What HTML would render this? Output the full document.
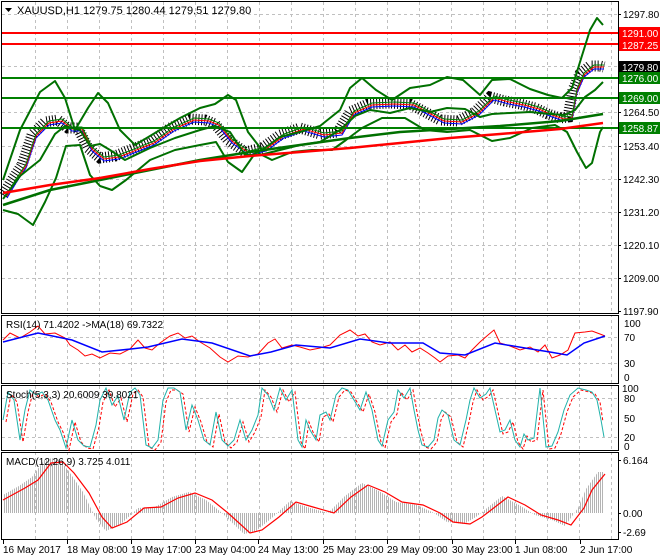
<!DOCTYPE html><html><head><meta charset="utf-8"><style>
body{margin:0;background:#fff;width:660px;height:560px;overflow:hidden}
svg{display:block;font-family:"Liberation Sans",sans-serif;font-size:10px}
</style></head><body>
<svg width="660" height="560" xmlns="http://www.w3.org/2000/svg">
<defs>
<pattern id="hb" width="2" height="10" patternUnits="userSpaceOnUse"><rect width="1" height="10" fill="#b4b4b4"/></pattern>
</defs>
<path d="M35.5 2V539M67.5 2V539M99.5 2V539M131.5 2V539M163.5 2V539M195.5 2V539M227.5 2V539M259.5 2V539M291.5 2V539M323.5 2V539M355.5 2V539M387.5 2V539M419.5 2V539M451.5 2V539M483.5 2V539M515.5 2V539M547.5 2V539M579.5 2V539M611.5 2V539" stroke="#c0c0c0" stroke-dasharray="3,3"/>
<path d="M2 14.5H618M2 44.5H618M2 66.5H618M2 112.5H618M2 146.5H618M2 179.5H618M2 212.5H618M2 245.5H618M2 278.5H618M2 337.5H618M2 363.5H618M2 398.5H618M2 437.5H618" stroke="#c0c0c0" stroke-dasharray="3,3"/>
<rect x="0" y="314" width="618" height="2" fill="#fff"/><rect x="0" y="384" width="618" height="2" fill="#fff"/><rect x="0" y="451" width="618" height="2" fill="#fff"/>
<g fill="none" stroke="#000">
<rect x="1.5" y="1.5" width="617" height="312"/>
<rect x="1.5" y="315.5" width="617" height="68"/>
<rect x="1.5" y="385.5" width="617" height="65"/>
<rect x="1.5" y="452.5" width="617" height="87"/>
</g>
<polyline fill="none" stroke="#000" stroke-width="11" stroke-dasharray="1,2" points="3,195 12,180 22,165 32,135 45,122 58,120 68,128 78,128 88,148 100,158 115,156 130,150 150,142 170,128 190,119 205,120 215,124 228,140 245,152 262,148 280,135 300,128 320,134 338,132 350,112 368,104 390,103 410,104 425,112 440,120 458,121 475,112 490,97 505,101 520,104 535,108 548,114 560,118 568,117 573,90 580,74 590,66 600,66 604,67"/>
<g fill="none">
<polyline stroke="#00f" transform="translate(4,3)" points="3,195 12,180 22,165 32,135 45,122 58,120 68,128 78,128 88,148 100,158 115,156 130,150 150,142 170,128 190,119 205,120 215,124 228,140 245,152 262,148 280,135 300,128 320,134 338,132 350,112 368,104 390,103 410,104 425,112 440,120 458,121 475,112 490,97 505,101 520,104 535,108 548,114 560,118 568,117 573,90 580,74 590,66 600,66"/>
<polyline stroke="#f00" transform="translate(4,1)" points="3,195 12,180 22,165 32,135 45,122 58,120 68,128 78,128 88,148 100,158 115,156 130,150 150,142 170,128 190,119 205,120 215,124 228,140 245,152 262,148 280,135 300,128 320,134 338,132 350,112 368,104 390,103 410,104 425,112 440,120 458,121 475,112 490,97 505,101 520,104 535,108 548,114 560,118 568,117 573,90 580,74 590,66 600,66"/>
<polyline stroke="#008000" transform="translate(4,-1)" points="3,195 12,180 22,165 32,135 45,122 58,120 68,128 78,128 88,148 100,158 115,156 130,150 150,142 170,128 190,119 205,120 215,124 228,140 245,152 262,148 280,135 300,128 320,134 338,132 350,112 368,104 390,103 410,104 425,112 440,120 458,121 475,112 490,97 505,101 520,104 535,108 548,114 560,118 568,117 573,90 580,74 590,66 600,66"/>
</g>
<path d="M2 33H618M2 44H618" stroke="#f00" stroke-width="2"/>
<path d="M2 78H618M2 98H618M2 128H618" stroke="#008000" stroke-width="2"/>
<g fill="none" stroke="#007000" stroke-width="2" stroke-linejoin="round">
<polyline points="3,180 20,130 40,92 55,81 65,98 75,130 88,108 98,93 108,103 120,130 135,145 160,130 180,118 200,108 215,104 228,95 236,100 248,132 262,150 280,137 300,132 320,126 340,110 350,88 362,78 376,90 392,100 410,88 430,85 447,77 463,80 480,95 492,80 510,79 530,89 548,95 562,98 572,88 580,62 590,30 597,18 603,25"/>
<polyline points="3,210 18,214 33,225 45,202 56,178 66,146 80,145 90,175 100,186 112,190 126,180 150,160 175,150 200,145 216,142 228,162 242,172 256,152 272,160 292,152 312,150 332,150 346,140 362,128 382,118 405,118 425,130 447,132 470,130 492,141 510,138 532,128 555,125 567,132 577,152 586,168 592,163 600,132 603,127"/>
<polyline points="3,199 20,176 40,160 55,134 65,126 80,130 90,146 100,144 110,150 125,160 150,148 175,138 200,130 215,126 230,132 245,155 260,155 280,150 300,145 320,142 340,130 355,116 370,110 390,113 410,108 430,112 447,108 465,109 480,117 492,114 510,113 530,112 550,114 565,115 575,110 585,97 595,90 603,82"/>
<polyline stroke-width="2.5" points="3,205 50,190 100,180 150,170 200,160 250,152 300,145 350,138 400,132 450,129 500,126 560,121 603,114"/>
</g>
<polyline fill="none" stroke="#f00" stroke-width="2.5" points="3,193 50,185 100,178 150,169 200,161 250,156 300,152 350,148 400,143 450,138 500,134 560,129 603,123"/>
<path d="M5 8L12 8L8.5 12Z" fill="#000"/>
<text x="17" y="14" font-size="11">XAUUSD,H1  1279.75 1280.44 1279.51 1279.80</text>
<g stroke="#000"><path d="M618 14.5h3M618 112.5h3M618 146.5h3M618 179.5h3M618 212.5h3M618 245.5h3M618 278.5h3M618 311.5h3M618 460.5h3M618 513.5h3M618 532.5h3"/></g>
<text x="623" y="18">1297.80</text>
<text x="623" y="116">1264.50</text>
<text x="623" y="150">1253.40</text>
<text x="623" y="183">1242.30</text>
<text x="623" y="216">1231.20</text>
<text x="623" y="249">1220.10</text>
<text x="623" y="282">1209.00</text>
<text x="623" y="315">1197.90</text>
<rect x="619" y="27" width="41" height="12" fill="#f00"/><text x="622" y="37" fill="#fff">1291.00</text>
<rect x="619" y="39" width="41" height="12" fill="#f00"/><text x="622" y="49" fill="#fff">1287.25</text>
<rect x="619" y="61" width="41" height="12" fill="#000"/><text x="622" y="71" fill="#fff">1279.80</text>
<rect x="619" y="72" width="41" height="12" fill="#008000"/><text x="622" y="82" fill="#fff">1276.00</text>
<rect x="619" y="92" width="41" height="12" fill="#008000"/><text x="622" y="102" fill="#fff">1269.00</text>
<rect x="619" y="122" width="41" height="12" fill="#008000"/><text x="622" y="132" fill="#fff">1258.87</text>
<polyline fill="none" stroke="#f00" points="3,340 10,333 20,338 30,332 38,326 45,334 55,333 65,338 70,345 78,350 85,356 92,354 100,358 110,353 120,354 130,349 138,340 145,348 152,350 160,343 170,336 178,333 185,338 192,336 200,342 210,348 220,357 228,362 238,356 248,357 258,354 268,343 275,339 282,348 292,345 300,347 310,350 320,348 330,345 340,335 350,330 358,336 365,334 372,342 380,345 390,342 398,350 405,345 412,352 420,348 428,353 435,358 440,362 448,356 458,355 465,358 472,350 480,342 488,335 494,330 500,343 510,346 520,350 530,347 538,352 545,345 552,358 560,355 568,350 575,333 585,332 592,331 600,334 605,336"/>
<polyline fill="none" stroke="#00f" stroke-width="1.5" points="3,342 38,333 72,340 102,352 131,349 148,347 182,339 212,343 250,356 271,352 296,345 330,348 360,339 389,343 423,343 440,353 465,355 495,343 525,348 550,352 567,355 584,343 605,336"/>
<text x="6" y="328">RSI(14) 71.4202  -&gt;MA(18) 69.7322</text>
<text x="624" y="327">100</text><text x="624" y="341">70</text><text x="624" y="367">30</text><text x="624" y="381">0</text>
<polyline fill="none" stroke="#f00" stroke-dasharray="3,2" transform="translate(3,2)" points="3,420 8,392 14,400 20,440 25,410 30,390 36,395 42,392 48,400 55,420 60,430 66,448 72,420 78,440 84,446 90,447 96,425 100,400 106,388 112,405 118,396 124,420 130,392 135,388 140,395 146,445 152,448 158,440 163,400 168,388 174,388 180,392 186,430 192,405 198,420 204,440 210,445 216,412 222,440 228,446 234,440 240,420 246,440 252,430 258,415 262,388 268,395 274,410 280,388 286,400 292,390 298,440 302,447 306,420 310,430 316,440 320,415 326,412 330,420 336,395 342,388 348,390 354,400 360,410 366,392 372,410 378,440 382,446 388,420 394,412 398,390 404,398 410,388 414,410 418,430 422,445 428,447 434,440 438,418 442,410 448,415 454,440 460,445 466,420 470,400 474,388 480,398 486,394 490,388 495,410 500,432 505,430 510,420 515,440 520,447 524,434 528,440 534,438 540,388 546,447 552,446 558,432 564,410 570,395 578,388 586,390 592,392 597,400 600,420"/>
<polyline fill="none" stroke="#20b2aa" points="3,420 8,392 14,400 20,440 25,410 30,390 36,395 42,392 48,400 55,420 60,430 66,448 72,420 78,440 84,446 90,447 96,425 100,400 106,388 112,405 118,396 124,420 130,392 135,388 140,395 146,445 152,448 158,440 163,400 168,388 174,388 180,392 186,430 192,405 198,420 204,440 210,445 216,412 222,440 228,446 234,440 240,420 246,440 252,430 258,415 262,388 268,395 274,410 280,388 286,400 292,390 298,440 302,447 306,420 310,430 316,440 320,415 326,412 330,420 336,395 342,388 348,390 354,400 360,410 366,392 372,410 378,440 382,446 388,420 394,412 398,390 404,398 410,388 414,410 418,430 422,445 428,447 434,440 438,418 442,410 448,415 454,440 460,445 466,420 470,400 474,388 480,398 486,394 490,388 495,410 500,432 505,430 510,420 515,440 520,447 524,434 528,440 534,438 540,388 546,447 552,446 558,432 564,410 570,395 578,388 586,390 592,392 597,400 601,420 604,437"/>
<text x="6" y="398">Stoch(5,3,3) 20.6009 39.8021</text>
<text x="622" y="392">100</text><text x="624" y="402">80</text><text x="624" y="422">50</text><text x="624" y="441">20</text><text x="624" y="450">0</text>
<polygon fill="url(#hb)" points="3,513 3,495 19,486 32,477 45,459 57,458 68,470 83,492 96,519 106,531 121,524 138,508 155,507 172,497 189,492 206,500 222,513 244,534 256,531 273,517 290,501 307,507 328,513 345,496 362,483 379,491 396,502 417,505 434,513 447,522 464,524 476,517 502,496 519,505 535,515 552,520 565,526 578,508 586,489 598,472 604,472 604,513"/>
<polyline fill="none" stroke="#f00" stroke-width="1.2" points="3,500 25,488 38,480 51,463 63,462 74,473 89,493 102,517 112,528 127,522 144,508 161,507 178,498 195,493 212,500 228,513 250,533 262,530 279,517 296,502 313,507 334,513 351,497 368,485 385,492 402,502 423,505 440,513 453,522 470,524 482,517 508,497 525,505 541,515 558,520 571,525 584,508 592,490 605,474"/>
<text x="6" y="465">MACD(12,26,9) 3.725 4.011</text>
<text x="623" y="464">6.164</text><text x="623" y="517">0.00</text><text x="623" y="536">-2.69</text>
<path d="M3.5 540v4M67.5 540v4M131.5 540v4M195.5 540v4M258.5 540v4M323.5 540v4M387.5 540v4M452.5 540v4M515.5 540v4M580.5 540v4" stroke="#000"/>
<text x="3" y="553">16 May 2017</text><text x="67" y="553">18 May 08:00</text><text x="131" y="553">19 May 17:00</text><text x="195" y="553">23 May 04:00</text><text x="258" y="553">24 May 13:00</text><text x="323" y="553">25 May 23:00</text><text x="387" y="553">29 May 09:00</text><text x="452" y="553">30 May 23:00</text><text x="515" y="553">1 Jun 08:00</text><text x="580" y="553">2 Jun 17:00</text>
</svg>
</body></html>
